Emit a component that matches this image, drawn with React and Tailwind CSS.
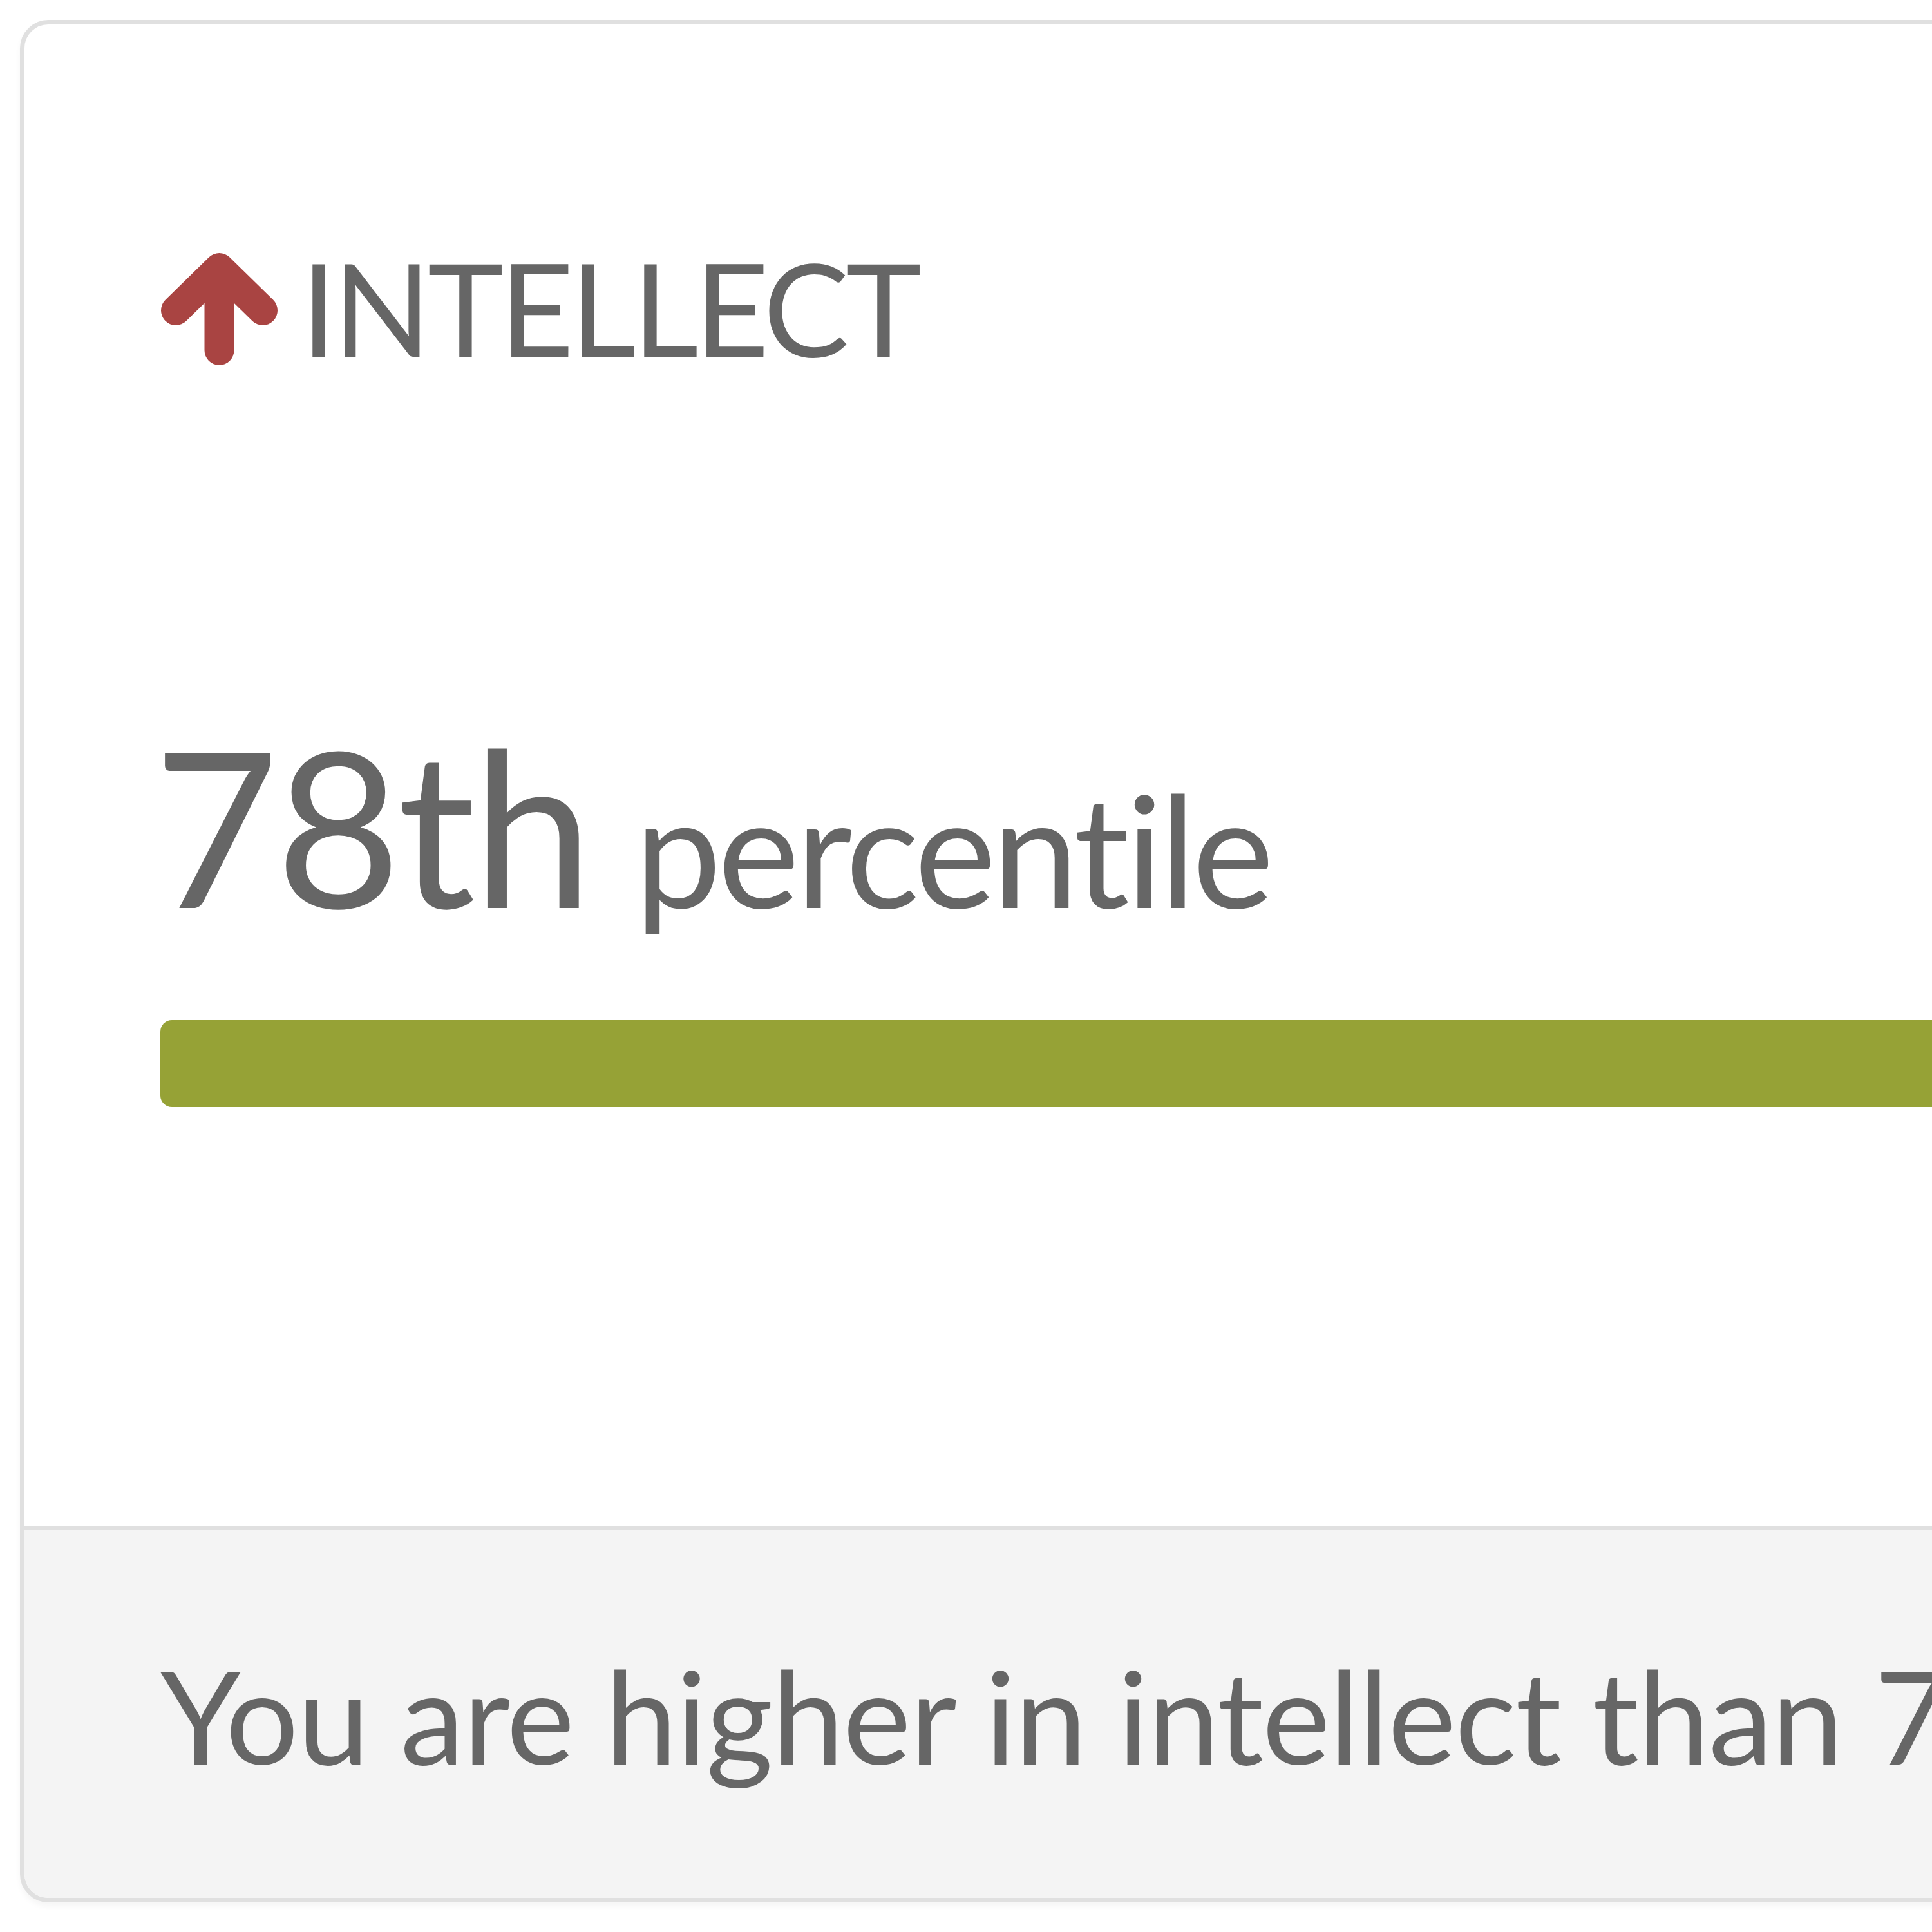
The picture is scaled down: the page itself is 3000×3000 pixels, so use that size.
export default function App() {
  return (
    <div className="w-[3000px] h-[3000px] bg-white overflow-hidden pt-[31px] pl-[31px] font-['Lato',sans-serif]">
      <div className="w-[4200px] border-[7px] border-[#e0e0e0] rounded-[44px] bg-white overflow-hidden shadow-[0_6px_10px_rgba(0,0,0,0.04)]">
        {/* body */}
        <div className="pl-[211px] pt-[339px] pb-[650px]">
          <div className="flex items-start">
            <svg
              className="mt-[15px] shrink-0"
              width="183"
              height="176"
              viewBox="0 0 183 176"
              fill="none"
              stroke="#a94442"
              strokeWidth="46"
              strokeLinecap="round"
              strokeLinejoin="round"
            >
              <path d="M24 90 L91.5 24 L159 90" />
              <path d="M91.5 30 L91.5 152" />
            </svg>
            <div className="ml-[35px] text-[200px] leading-none text-[#666666] whitespace-nowrap tracking-[-6px]">
              INTELLECT
            </div>
          </div>

          <div className="mt-[535px] flex items-baseline whitespace-nowrap text-[#666666]">
            <span className="-ml-[11px] text-[336px] leading-none tracking-[-5px]">78th</span>
            <span className="ml-[70px] text-[240px] leading-none tracking-[-5.5px]">percentile</span>
          </div>

          <div className="mt-[136px] h-[135px] w-[3800px] rounded-[18px] bg-[#96a236]"></div>
        </div>

        {/* footer */}
        <div className="border-t-[7px] border-[#e0e0e0] bg-[#f4f4f4] pl-[211px] pt-[187px] pb-[184px]">
          <div className="text-[200px] leading-none text-[#666666] whitespace-nowrap tracking-[-1.6px]">
            You are higher in intellect than 78% of the population.
          </div>
        </div>
      </div>
    </div>
  );
}
